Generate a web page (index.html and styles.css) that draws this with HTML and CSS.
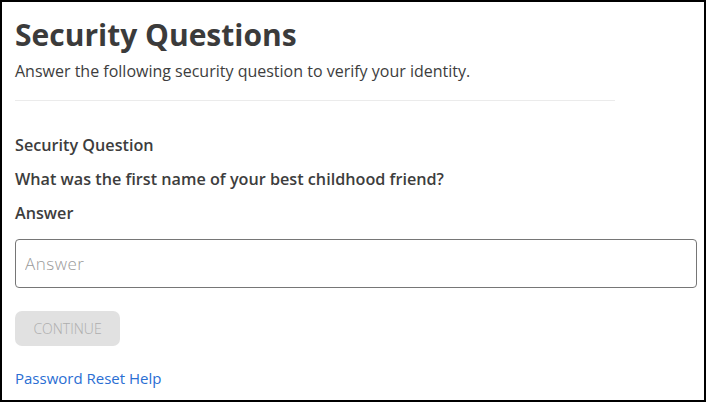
FILE: index.html
```html
<!DOCTYPE html>
<html lang="en">
<head>
<meta charset="utf-8">
<title>Security Questions</title>
<link rel="stylesheet" href="styles.css">
</head>
<body>
<main class="page">
  <h1 class="title">Security Questions</h1>
  <p class="subtitle">Answer the following security question to verify your identity.</p>
  <hr class="divider">
  <div class="label">Security Question</div>
  <div class="question">What was the first name of your best childhood friend?</div>
  <label class="label answer-label" for="answer">Answer</label>
  <input class="answer-input" id="answer" type="text" placeholder="Answer">
  <button class="continue" type="button" disabled>CONTINUE</button>
  <a class="help" href="#">Password Reset Help</a>
</main>
</body>
</html>
```
FILE: styles.css
```css
* { box-sizing: border-box; }
html, body { margin: 0; padding: 0; }
body {
  width: 706px;
  height: 402px;
  border: 2px solid #000;
  background: #fff;
  font-family: "Open Sans", "Liberation Sans", sans-serif;
  color: #3d3d3d;
  overflow: hidden;
}
.page {
  display: flex;
  flex-direction: column;
  align-items: flex-start;
  padding: 12px 7px 0 13px;
}
.title {
  margin: 0;
  font-size: 30px;
  font-weight: 700;
  line-height: 42px;
  color: #3b3b3b;
}
.subtitle {
  margin: 4px 0 0;
  font-size: 16px;
  line-height: 22px;
  color: #3d3d3d;
}
.divider {
  align-self: stretch;
  width: 600px;
  margin: 18px 0 0;
  border: 0;
  border-top: 1px solid #ebebeb;
}
.label {
  margin-top: 33px;
  font-size: 16.2px;
  font-weight: 600;
  line-height: 22px;
  color: #3d3d3d;
}
.question {
  margin-top: 12px;
  font-size: 16.2px;
  font-weight: 600;
  line-height: 22px;
  color: #3d3d3d;
}
.answer-label { margin-top: 12px; }
.answer-input {
  align-self: stretch;
  margin-top: 15px;
  height: 49px;
  border: 1px solid #767676;
  border-radius: 4px;
  padding: 0 9px;
  font-family: inherit;
  font-size: 17px;
  font-weight: 300;
  color: #333;
  outline: none;
}
.answer-input::placeholder { color: #9a9a9a; letter-spacing: 0.5px; }
.continue {
  margin-top: 23px;
  width: 105px;
  height: 35px;
  border: 0;
  border-radius: 7px;
  background: #e1e1e1;
  color: #adadad;
  font-family: inherit;
  font-size: 14px;
  font-weight: 300;
  padding: 0;
}
.help {
  margin-top: 21px;
  font-size: 15px;
  line-height: 22px;
  color: #2a6ed3;
  text-decoration: none;
}
```
